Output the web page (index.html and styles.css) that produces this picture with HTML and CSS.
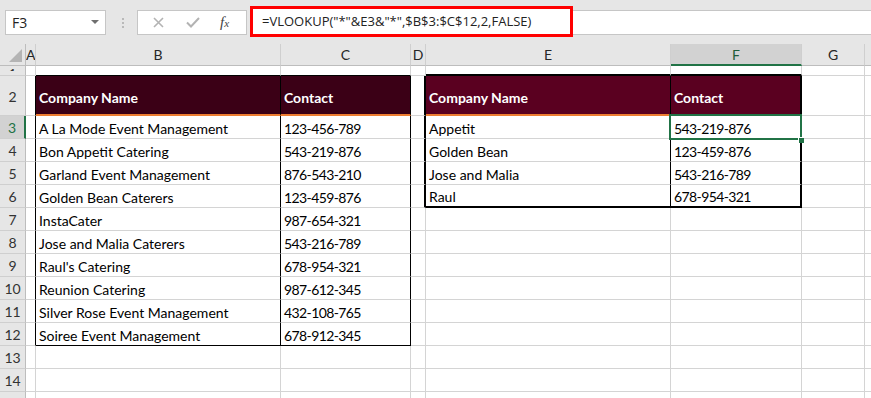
FILE: index.html
```html
<!DOCTYPE html>
<html lang="en">
<head>
    <meta charset="UTF-8">
    <meta name="viewport" content="width=device-width, initial-scale=1.0">
    <title>VLOOKUP wildcard match</title>
    <link rel="stylesheet" href="styles.css">
</head>
<body>
    <!-- Name box and formula bar -->
    <div class="formula-bar">
        <div class="name-box">
            <span>F3</span>
            <svg class="drop" width="8" height="5" viewBox="0 0 8 5"><path d="M0 0H8L4 4Z" fill="#6f6f6f"/></svg>
        </div>
        <svg class="grip" width="3" height="11" viewBox="0 0 3 11">
            <rect x="0" y="0" width="2" height="2" fill="#b9b9b9"/>
            <rect x="0" y="4" width="2" height="2" fill="#b9b9b9"/>
            <rect x="0" y="8" width="2" height="2" fill="#b9b9b9"/>
        </svg>
        <div class="fx-box">
            <svg width="11" height="11" viewBox="0 0 11 11"><path d="M1 1L10 10M10 1L1 10" stroke="#b3b3b3" stroke-width="1.6"/></svg>
            <svg width="14" height="11" viewBox="0 0 14 11"><path d="M1 5.5L5 9.5L13 1" stroke="#b3b3b3" stroke-width="2" fill="none"/></svg>
            <span class="fx">f<i>x</i></span>
        </div>
        <div class="formula-input">
            <div class="formula-mark">=VLOOKUP("*"&amp;E3&amp;"*",$B$3:$C$12,2,FALSE)</div>
        </div>
    </div>

    <!-- Worksheet grid -->
    <div class="sheet-wrap">
        <table class="sheet">
            <colgroup>
                <col class="w-rh"><col class="w-a"><col class="w-b"><col class="w-c"><col class="w-d"><col class="w-e"><col class="w-f"><col class="w-g"><col class="w-h">
            </colgroup>
            <tr class="r-head">
                <td class="corner"><svg width="13" height="13" viewBox="0 0 13 13"><path d="M13 0V13H0Z" fill="#b4b4b4"/></svg></td>
                <td class="ch">A</td><td class="ch">B</td><td class="ch">C</td><td class="ch">D</td><td class="ch">E</td><td class="ch active">F</td><td class="ch">G</td><td class="ch"></td>
            </tr>
            <tr class="r-1">
                <td class="rh"><span>1</span></td>
                <td></td><td class="l-top"></td><td class="l-top"></td><td></td><td class="r-top"></td><td class="r-top"></td><td></td><td></td>
            </tr>
            <tr class="r-2">
                <td class="rh">2</td>
                <td class="l-edge"></td>
                <td class="l hd">Company Name</td><td class="l hd">Contact</td>
                <td class="r-edge"></td>
                <td class="r-mid hd hd-r">Company Name</td><td class="r-end hd hd-r">Contact</td>
                <td></td><td></td>
            </tr>
            <tr>
                <td class="rh active">3</td>
                <td class="l-edge"></td><td class="l">A La Mode Event Management</td><td class="l num">123-456-789</td>
                <td class="r-edge"></td><td class="r-mid">Appetit</td>
                <td class="r-end num sel">543-219-876<div class="sel-box"><i class="handle"></i></div></td>
                <td></td><td></td>
            </tr>
            <tr>
                <td class="rh">4</td>
                <td class="l-edge"></td><td class="l">Bon Appetit Catering</td><td class="l num">543-219-876</td>
                <td class="r-edge"></td><td class="r-mid">Golden Bean</td><td class="r-end num">123-459-876</td>
                <td></td><td></td>
            </tr>
            <tr>
                <td class="rh">5</td>
                <td class="l-edge"></td><td class="l">Garland Event Management</td><td class="l num">876-543-210</td>
                <td class="r-edge"></td><td class="r-mid">Jose and Malia</td><td class="r-end num">543-216-789</td>
                <td></td><td></td>
            </tr>
            <tr>
                <td class="rh">6</td>
                <td class="l-edge"></td><td class="l">Golden Bean Caterers</td><td class="l num">123-459-876</td>
                <td class="r-edge"></td><td class="r-mid r-bot">Raul</td><td class="r-end num r-bot">678-954-321</td>
                <td></td><td></td>
            </tr>
            <tr>
                <td class="rh">7</td>
                <td class="l-edge"></td><td class="l">InstaCater</td><td class="l num">987-654-321</td>
                <td></td><td></td><td></td><td></td><td></td>
            </tr>
            <tr>
                <td class="rh">8</td>
                <td class="l-edge"></td><td class="l">Jose and Malia Caterers</td><td class="l num">543-216-789</td>
                <td></td><td></td><td></td><td></td><td></td>
            </tr>
            <tr>
                <td class="rh">9</td>
                <td class="l-edge"></td><td class="l">Raul's Catering</td><td class="l num">678-954-321</td>
                <td></td><td></td><td></td><td></td><td></td>
            </tr>
            <tr>
                <td class="rh">10</td>
                <td class="l-edge"></td><td class="l">Reunion Catering</td><td class="l num">987-612-345</td>
                <td></td><td></td><td></td><td></td><td></td>
            </tr>
            <tr>
                <td class="rh">11</td>
                <td class="l-edge"></td><td class="l">Silver Rose Event Management</td><td class="l num">432-108-765</td>
                <td></td><td></td><td></td><td></td><td></td>
            </tr>
            <tr>
                <td class="rh">12</td>
                <td class="l-edge"></td><td class="l l-bot">Soiree Event Management</td><td class="l num l-bot">678-912-345</td>
                <td></td><td></td><td></td><td></td><td></td>
            </tr>
            <tr>
                <td class="rh">13</td>
                <td></td><td></td><td></td><td></td><td></td><td></td><td></td><td></td>
            </tr>
            <tr>
                <td class="rh">14</td>
                <td></td><td></td><td></td><td></td><td></td><td></td><td></td><td></td>
            </tr>
            <tr>
                <td class="rh"></td>
                <td></td><td></td><td></td><td></td><td></td><td></td><td></td><td></td>
            </tr>
        </table>
    </div>
</body>
</html>
```

FILE: styles.css
```css
/* Page */
body {
    margin: 0;
    width: 871px;
    height: 398px;
    overflow: hidden;
    background: #e6e6e6;
    font-family: Lato, "Liberation Sans", sans-serif;
}

/* Formula bar strip */
.formula-bar {
    height: 44px;
    display: flex;
    align-items: flex-start;
    padding-left: 5px;
    box-sizing: border-box;
}

.name-box {
    width: 101px;
    height: 25px;
    margin-top: 10px;
    box-sizing: border-box;
    background: #fff;
    border: 1px solid #c6c6c6;
    display: flex;
    align-items: center;
    justify-content: space-between;
    padding: 0 6px 0 6px;
    font-family: "Open Sans", sans-serif;
    font-size: 14px;
    color: #222;
}

.grip {
    margin: 18px 0 0 16px;
}

.fx-box {
    width: 110px;
    height: 25px;
    margin: 10px 0 0 12px;
    box-sizing: border-box;
    background: #fff;
    border: 1px solid #c6c6c6;
    display: flex;
    align-items: center;
    padding-left: 15px;
    gap: 22px;
}

.fx {
    font-family: "Liberation Serif", serif;
    font-style: italic;
    font-size: 15px;
    color: #444;
    margin-left: -2px;
}

.fx i {
    font-size: 11px;
}

/* White input strip; the red box marks the formula on top of it */
.formula-input {
    flex: 1;
    height: 25px;
    margin: 10px 0 0 3px;
    box-sizing: border-box;
    background: #fff;
    border: 1px solid #c6c6c6;
    border-right: none;
}

.formula-mark {
    width: 323px;
    height: 31px;
    margin: -5px 0 0 -1px;
    box-sizing: border-box;
    background: #fff;
    border: 3px solid #ff0000;
    padding-left: 9px;
    font-family: "Open Sans", sans-serif;
    font-size: 13px;
    line-height: 24px;
    color: #222;
    white-space: nowrap;
}

/* Worksheet grid */
.sheet-wrap {
    background: #fff;
    overflow: hidden;
}

.sheet {
    table-layout: fixed;
    border-collapse: separate;
    border-spacing: 0;
    width: 965px;
    font-size: 14px;
    color: #000;
}

.w-rh { width: 26px; }
.w-a { width: 10px; }
.w-b { width: 245px; }
.w-c { width: 130px; }
.w-d { width: 15px; }
.w-e { width: 245px; }
.w-f { width: 131px; }
.w-g { width: 63px; }
.w-h { width: 100px; }

.sheet td {
    box-sizing: border-box;
    padding: 2px 0 0 3px;
    border-right: 1px solid #d4d4d4;
    border-bottom: 1px solid #d4d4d4;
    white-space: nowrap;
    overflow: hidden;
    vertical-align: middle;
}

.sheet .num {
    letter-spacing: -0.6px;
}

.sheet tr { height: 23px; }
.sheet .r-head { height: 22px; }
.sheet .r-1 { height: 10px; }
.sheet .r-2 { height: 40px; }

/* Column and row headers */
.sheet .ch {
    background: #e6e6e6;
    border-right-color: #cfcfcf;
    border-bottom-color: #bdbdbd;
    text-align: center;
    padding: 0;
    font-size: 14px;
    color: #262626;
}

.sheet .ch.active {
    background: #d2d2d2;
    border-bottom: 2px solid #217346;
    color: #1e5c3a;
}

.sheet .corner {
    background: #e6e6e6;
    border-right-color: #bdbdbd;
    border-bottom-color: #bdbdbd;
    padding: 0;
    vertical-align: bottom;
    text-align: right;
    line-height: 0;
}

.sheet .corner svg {
    margin: 0 3px 3px 0;
}

.sheet .rh {
    background: #e6e6e6;
    border-right-color: #bdbdbd;
    border-bottom-color: #cfcfcf;
    text-align: center;
    padding: 1px 0 0;
    font-size: 14px;
    color: #333;
}

.sheet .r-1 .rh {
    vertical-align: top;
    padding: 0;
    line-height: 10px;
}

.sheet .r-1 .rh span {
    display: block;
    height: 5px;
    overflow: hidden;
    line-height: 16px;
}

.sheet .rh.active {
    background: #d2d2d2;
    border-right: 2px solid #217346;
    color: #217346;
}

/* Left table */
.sheet .l-edge { border-right-color: #000; }
.sheet .l-top { border-bottom-color: #000; }
.sheet .l { border-right-color: #000; }
.sheet .l-bot { border-bottom-color: #000; }

/* Right table */
.sheet .r-edge { border-right: 2px solid #000; }
.sheet .r-top { border-bottom: 2px solid #000; }
.sheet .r-mid { border-right-color: #000; }
.sheet .r-end { border-right: 2px solid #000; }
.sheet .r-bot { border-bottom: 2px solid #000; }

/* Header cells */
.sheet .hd {
    background: #3b0016;
    color: #fff;
    font-weight: bold;
    border-bottom: 2px solid #ed7d31;
    padding-top: 4px;
}

.sheet .hd-r {
    background: #5a0020;
}

/* Selected cell */
.sheet .sel {
    position: relative;
    overflow: visible;
}

.sel-box {
    position: absolute;
    left: -2px;
    top: -2px;
    right: -2px;
    bottom: -2px;
    border: 2px solid #217346;
}

.sel-box .handle {
    position: absolute;
    right: -4px;
    bottom: -5px;
    width: 5px;
    height: 5px;
    background: #217346;
    border: 1px solid #fff;
    border-right: none;
    border-bottom: none;
}
```
